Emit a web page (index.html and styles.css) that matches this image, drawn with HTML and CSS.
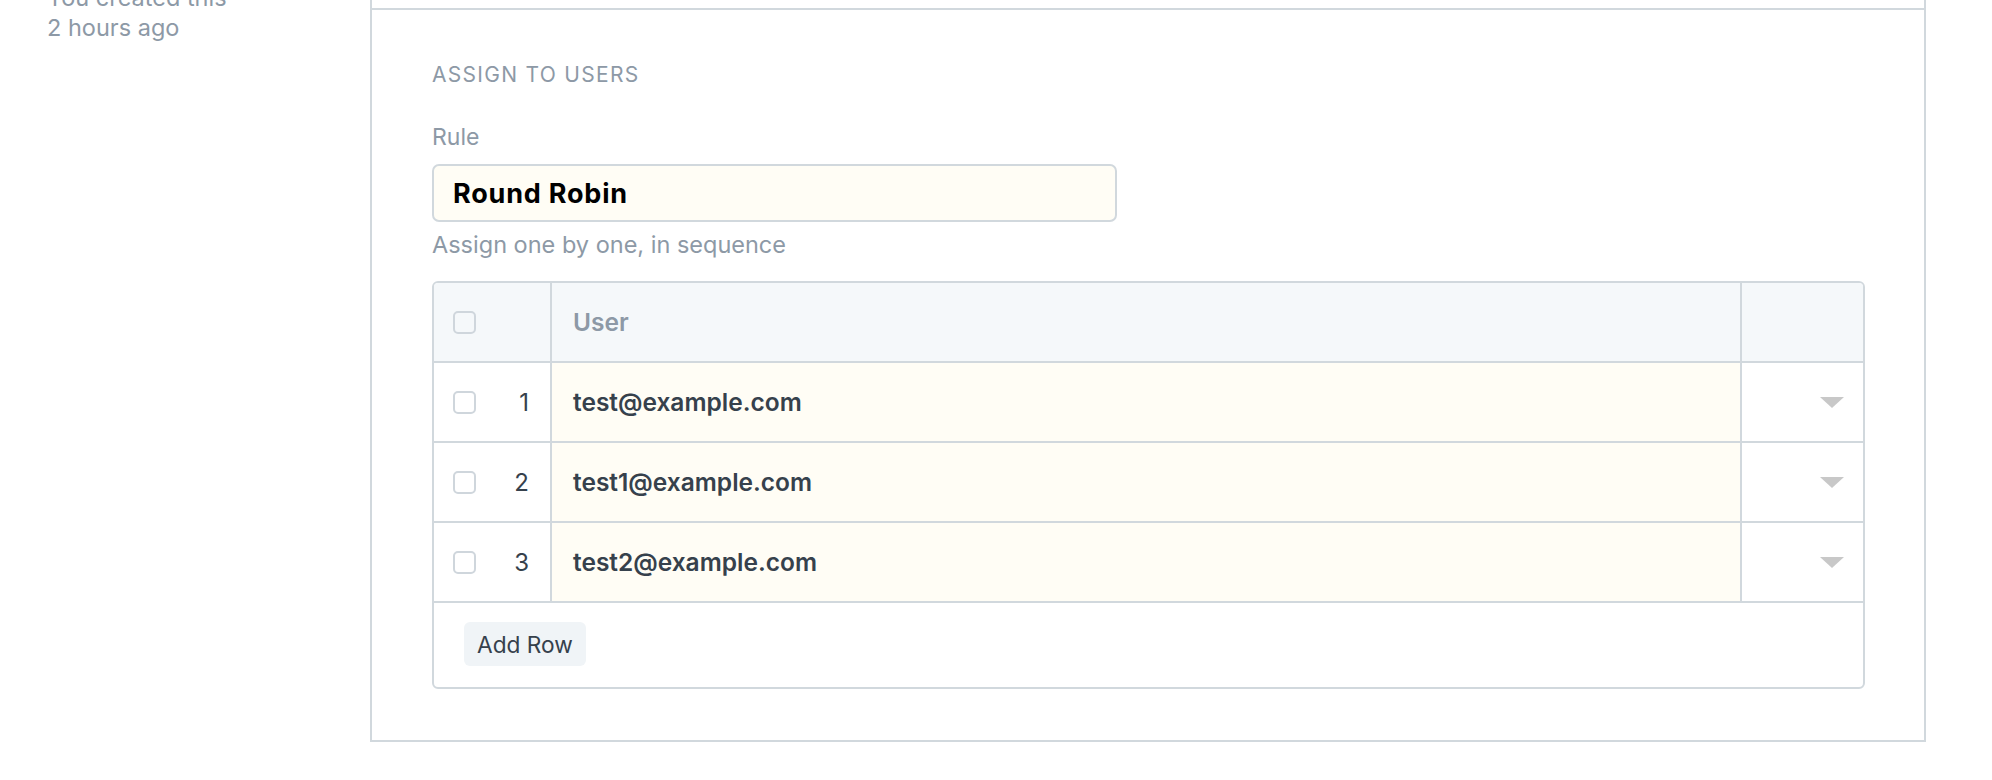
FILE: index.html
```html
<!DOCTYPE html>
<html lang="en">
<head>
<meta charset="utf-8">
<title>Assign to users</title>
<link rel="stylesheet" href="styles.css">
</head>
<body>
<div class="page">
  <aside class="sidebar">
    <div class="meta">You created this</div>
    <div class="meta">2 hours ago</div>
  </aside>
  <main class="panel">
    <div class="prev-section"></div>
    <section class="section">
      <h3 class="section-head">Assign to Users</h3>
      <div class="field">
        <label class="label">Rule</label>
        <div class="input">Round Robin</div>
        <p class="help">Assign one by one, in sequence</p>
      </div>
      <div class="grid">
        <div class="row head">
          <div class="cell c-idx"><span class="check"></span></div>
          <div class="cell c-user">User</div>
          <div class="cell c-act"></div>
        </div>
        <div class="row">
          <div class="cell c-idx"><span class="check"></span><span class="num">1</span></div>
          <div class="cell c-user val">test@example.com</div>
          <div class="cell c-act"><span class="caret"></span></div>
        </div>
        <div class="row">
          <div class="cell c-idx"><span class="check"></span><span class="num">2</span></div>
          <div class="cell c-user val">test1@example.com</div>
          <div class="cell c-act"><span class="caret"></span></div>
        </div>
        <div class="row">
          <div class="cell c-idx"><span class="check"></span><span class="num">3</span></div>
          <div class="cell c-user val">test2@example.com</div>
          <div class="cell c-act"><span class="caret"></span></div>
        </div>
        <div class="footer">
          <button class="btn">Add Row</button>
        </div>
      </div>
    </section>
  </main>
</div>
</body>
</html>
```

FILE: styles.css
```css
* { box-sizing: border-box; }
html, body { margin: 0; padding: 0; background: #ffffff; }
body {
  font-family: Inter, "Noto Sans", "Liberation Sans", sans-serif;
  color: #36414c;
  overflow: hidden;
}
.page {
  display: flex;
  align-items: flex-start;
  width: 1992px;
}
.sidebar {
  width: 370px;
  flex: none;
  padding-left: 47px;
  margin-top: -17px;
}
.meta {
  font-size: 23.5px;
  line-height: 30px;
  color: #8d99a6;
}
.panel {
  width: 1556px;
  flex: none;
  margin-top: -40px;
  border-left: 2px solid #d1d8dd;
  border-right: 2px solid #d1d8dd;
  border-bottom: 2px solid #d1d8dd;
}
.prev-section {
  height: 50px;
  border-bottom: 2px solid #d1d8dd;
}
.section {
  padding: 52px 59px 51px 60px;
}
.section-head {
  margin: 0;
  font-size: 21px;
  line-height: 26px;
  font-weight: 400;
  letter-spacing: 1.3px;
  text-transform: uppercase;
  color: #8d99a6;
}
.field {
  margin-top: 34px;
}
.label {
  display: block;
  font-size: 23px;
  line-height: 30px;
  color: #8d99a6;
}
.input {
  margin-top: 12px;
  width: 685px;
  height: 58px;
  border: 2px solid #d1d8dd;
  border-radius: 7px;
  background: #fffdf5;
  padding: 0 19px;
  display: flex;
  align-items: center;
  font-size: 27px;
  font-weight: 650;
  letter-spacing: 0.8px;
  color: #000000;
}
.help {
  margin: 8px 0 0;
  font-size: 23.5px;
  line-height: 30px;
  color: #8d99a6;
}
.grid {
  margin-top: 21px;
  width: 1433px;
  border: 2px solid #d1d8dd;
  border-radius: 6px;
  overflow: hidden;
}
.row {
  display: flex;
  height: 80px;
  border-bottom: 2px solid #d1d8dd;
}
.row.head {
  background: #f5f8fa;
}
.cell {
  display: flex;
  align-items: center;
  border-right: 2px solid #d1d8dd;
}
.c-idx {
  width: 118px;
  flex: none;
  padding: 0 21px 0 19px;
  justify-content: space-between;
}
.c-user {
  flex: 1;
  padding-left: 21px;
  font-size: 24.5px;
  font-weight: 600;
  color: #8d99a6;
}
.c-user.val {
  background: #fffdf5;
  color: #36414c;
}
.c-act {
  width: 121px;
  flex: none;
  border-right: 0;
  justify-content: flex-end;
  padding-right: 19px;
}
.check {
  width: 23px;
  height: 23px;
  border: 2px solid #cfd6dc;
  border-radius: 5px;
  flex: none;
}
.num {
  font-size: 24px;
  color: #36414c;
}
.caret {
  width: 0;
  height: 0;
  border-left: 12px solid transparent;
  border-right: 12px solid transparent;
  border-top: 11px solid #c8c8c8;
}
.footer {
  height: 84px;
  padding: 19px 0 0 30px;
}
.btn {
  font-family: inherit;
  height: 44px;
  padding: 0 13px;
  border: 0;
  border-radius: 6px;
  background: #f0f4f7;
  font-size: 22.7px;
  color: #36414c;
}
```
